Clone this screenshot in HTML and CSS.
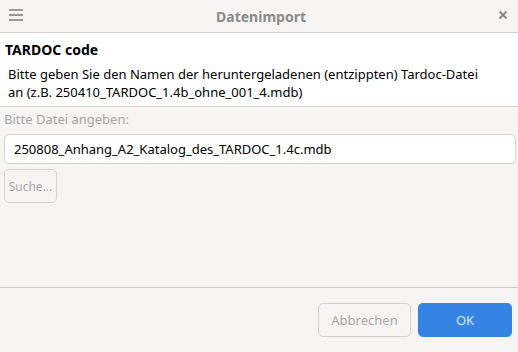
FILE: index.html
```html
<!DOCTYPE html>
<html lang="de">
<head>
    <meta charset="UTF-8">
    <title>Datenimport</title>
    <link rel="stylesheet" href="styles.css">
</head>
<body>
    <!-- Titelleiste -->
    <div class="titlebar">
        <svg class="menu-icon" width="16" height="14" viewBox="0 0 16 14">
            <rect x="1" y="1" width="14" height="2" fill="#999"/>
            <rect x="1" y="6" width="14" height="2" fill="#999"/>
            <rect x="1" y="11" width="14" height="2" fill="#999"/>
        </svg>
        <h1>Datenimport</h1>
        <svg class="close-icon" width="10" height="10" viewBox="0 0 10 10">
            <path d="M1.5 1.5 L8.5 8.5 M8.5 1.5 L1.5 8.5" stroke="#8a8a8a" stroke-width="2"/>
        </svg>
    </div>

    <!-- Kopfbereich -->
    <div class="header">
        <h2>TARDOC code</h2>
        <p>Bitte geben Sie den Namen der heruntergeladenen (entzippten) Tardoc-Datei<br>an (z.B. 250410_TARDOC_1.4b_ohne_001_4.mdb)</p>
    </div>

    <!-- Dateiauswahl -->
    <div class="content">
        <label for="file-name">Bitte Datei angeben:</label>
        <input type="text" id="file-name" value="250808_Anhang_A2_Katalog_des_TARDOC_1.4c.mdb">
        <button class="search-btn" disabled>Suche...</button>
    </div>

    <!-- Knöpfe -->
    <div class="footer">
        <button class="btn cancel" disabled>Abbrechen</button>
        <button class="btn ok">OK</button>
    </div>
</body>
</html>
```

FILE: styles.css
```css
body {
    font-family: "Noto Sans", "Open Sans", sans-serif;
    font-size: 13px;
    background-color: #f6f5f4;
    color: #2e3436;
    margin: 0;
    padding: 0;
    width: 518px;
    height: 352px;
    display: flex;
    flex-direction: column;
    overflow: hidden;
}

.titlebar {
    height: 32px;
    border-bottom: 1px solid #d6d1cd;
    display: flex;
    align-items: center;
    justify-content: space-between;
    padding: 0 9px 0 8px;
    flex-shrink: 0;
}

.titlebar h1 {
    margin: 0;
    font-size: 14px;
    font-weight: bold;
    color: #8b8b8b;
}

.menu-icon {
    margin-top: -2px;
}

.close-icon {
    margin-right: 1px;
    margin-top: -2px;
}

.header {
    background-color: white;
    border-bottom: 1px solid #d6d1cd;
    padding: 7px 5px 5px 5px;
    flex-shrink: 0;
}

.header h2 {
    margin: 0 0 6px 0;
    font-size: 14px;
    font-weight: bold;
    color: #000;
}

.header p {
    margin: 0 0 0 3px;
    font-size: 13px;
    line-height: 18px;
    color: #000;
}

.content {
    display: flex;
    flex-direction: column;
    align-items: flex-start;
    padding: 3px 2px 0 4px;
    flex-grow: 1;
    border-bottom: 1px solid #cdc9c5;
}

label {
    color: #a5a5a5;
    font-size: 13px;
    line-height: 18px;
    margin-bottom: 6px;
}

input[type="text"] {
    box-sizing: border-box;
    width: 100%;
    height: 30px;
    padding: 0 9px;
    border: 1px solid #d6d1cd;
    border-radius: 5px;
    background-color: white;
    font-family: inherit;
    font-size: 13px;
    color: #000;
    margin-bottom: 5px;
}

.search-btn {
    box-sizing: border-box;
    height: 34px;
    width: 53px;
    padding: 0;
    border: 1px solid #d6d1cd;
    border-radius: 5px;
    background-color: #f6f5f4;
    color: #a8a8a8;
    font-family: inherit;
    font-size: 12px;
}

.footer {
    height: 64px;
    display: flex;
    justify-content: flex-end;
    align-items: flex-start;
    gap: 7px;
    padding: 15px 6px 0 0;
    flex-shrink: 0;
    box-sizing: border-box;
}

.btn {
    box-sizing: border-box;
    width: 94px;
    height: 34px;
    border-radius: 5px;
    font-family: inherit;
    font-size: 13px;
}

.cancel {
    width: 93px;
    border: 1px solid #d6d1cd;
    background-color: #f6f5f4;
    color: #a8a8a8;
}

.ok {
    border: none;
    background-color: #3584e4;
    color: #dbe8f8;
}
```
